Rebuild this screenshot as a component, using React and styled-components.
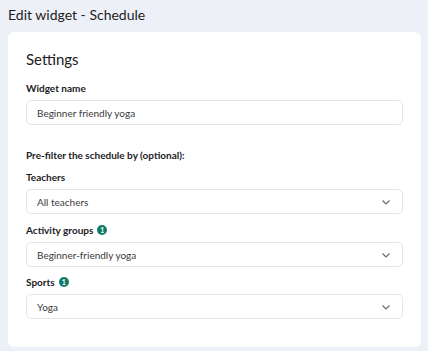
import styled, { createGlobalStyle } from 'styled-components'

const GlobalStyle = createGlobalStyle`
  html, body {
    margin: 0;
    padding: 0;
    background: #eef0f8;
  }
  body {
    font-family: Lato, "Noto Sans", sans-serif;
    color: #1c1c1e;
  }
`

const Page = styled.div`
  width: 428px;
  height: 351px;
  box-sizing: border-box;
  padding: 5px 7px 4px 8px;
  display: flex;
  flex-direction: column;
`

const Title = styled.h1`
  margin: 0;
  font-size: 14px;
  font-weight: 400;
  line-height: 20px;
`

const Card = styled.div`
  margin-top: 7px;
  flex: 1 1 auto;
  background: #fff;
  border-radius: 6px;
  padding: 17px 18px 0 18px;
  display: flex;
  flex-direction: column;
`

const CardTitle = styled.h2`
  margin: 0;
  font-size: 15px;
  font-weight: 400;
  line-height: 20px;
`

const Field = styled.div`
  margin-top: ${({ $top }) => $top}px;
  display: flex;
  flex-direction: column;
`

const Label = styled.div`
  display: flex;
  align-items: center;
  gap: 4px;
  font-size: 10px;
  font-weight: 700;
  line-height: 14px;
`

const Badge = styled.span`
  width: 10px;
  height: 10px;
  border-radius: 50%;
  background: #137a68;
  color: #fff;
  font-size: 7px;
  font-weight: 700;
  display: inline-flex;
  align-items: center;
  justify-content: center;
`

const Box = styled.div`
  margin-top: 5px;
  height: 25px;
  box-sizing: border-box;
  border: 1px solid #e6e6ea;
  border-radius: 5px;
  padding: 0 10px 0 10px;
  display: flex;
  align-items: center;
  justify-content: space-between;
  font-size: 10px;
  color: #3a3a3c;
`

const Section = styled.div`
  margin-top: 23px;
  font-size: 10px;
  font-weight: 700;
  line-height: 14px;
`

const Chevron = () => (
  <svg width="12" height="8" viewBox="0 0 12 8" fill="none">
    <path d="M2.5 2.5l3.5 3.5 3.5-3.5" stroke="#666" strokeWidth="1.1" />
  </svg>
)

const Select = ({ label, value, count, top }) => (
  <Field $top={top}>
    <Label>
      {label}
      {count && <Badge>{count}</Badge>}
    </Label>
    <Box>
      {value}
      <Chevron />
    </Box>
  </Field>
)

export default function App() {
  return (
    <>
      <GlobalStyle />
      <Page>
        <Title>Edit widget - Schedule</Title>
        <Card>
          <CardTitle>Settings</CardTitle>
          <Field $top={12}>
            <Label>Widget name</Label>
            <Box>Beginner friendly yoga</Box>
          </Field>
          <Section>Pre-filter the schedule by (optional):</Section>
          <Select top={8} label="Teachers" value="All teachers" />
          <Select top={9} label="Activity groups" value="Beginner-friendly yoga" count="1" />
          <Select top={8} label="Sports" value="Yoga" count="1" />
        </Card>
      </Page>
    </>
  )
}
